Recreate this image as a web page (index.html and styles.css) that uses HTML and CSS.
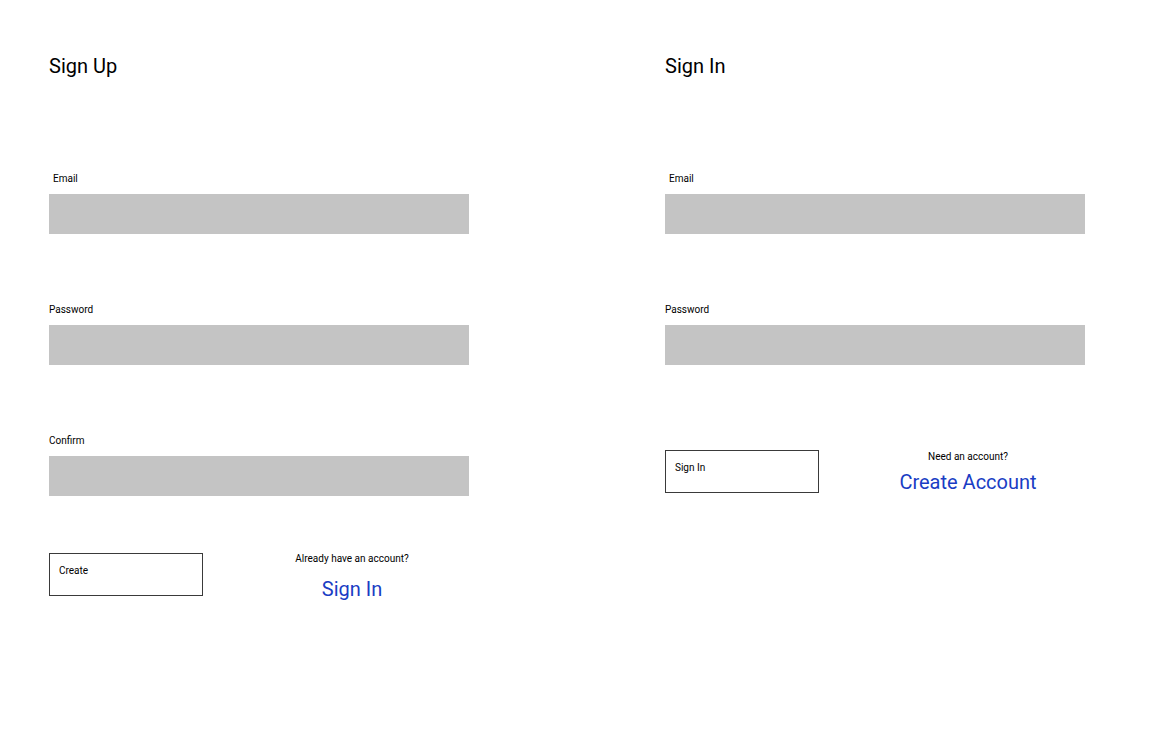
FILE: index.html
```html
<!DOCTYPE html>
<html lang="en">
<head>
<meta charset="utf-8">
<title>Sign Up / Sign In</title>
<link rel="stylesheet" href="styles.css">
</head>
<body>
<main class="page">
  <section class="panel">
    <h1 class="title">Sign Up</h1>
    <div class="fields">
      <div class="field">
        <label class="label label-indent">Email</label>
        <div class="input"></div>
      </div>
      <div class="field">
        <label class="label">Password</label>
        <div class="input"></div>
      </div>
      <div class="field">
        <label class="label">Confirm</label>
        <div class="input"></div>
      </div>
    </div>
    <div class="actions actions-signup">
      <button class="btn">Create</button>
      <div class="alt alt-signup">
        <p class="alt-text">Already have an account?</p>
        <a class="alt-link">Sign In</a>
      </div>
    </div>
  </section>
  <section class="panel">
    <h1 class="title">Sign In</h1>
    <div class="fields">
      <div class="field">
        <label class="label label-indent">Email</label>
        <div class="input"></div>
      </div>
      <div class="field">
        <label class="label">Password</label>
        <div class="input"></div>
      </div>
    </div>
    <div class="actions actions-signin">
      <button class="btn">Sign In</button>
      <div class="alt alt-signin">
        <p class="alt-text">Need an account?</p>
        <a class="alt-link">Create Account</a>
      </div>
    </div>
  </section>
</main>
</body>
</html>
```
FILE: styles.css
```css
* { box-sizing: border-box; }
html, body {
  margin: 0;
  padding: 0;
  background: #ffffff;
}
body {
  font-family: Roboto, "Liberation Sans", sans-serif;
  color: #000;
}
.page {
  display: flex;
  gap: 196px;
  padding: 54px 0 0 49px;
}
.panel {
  width: 420px;
  flex-shrink: 0;
  display: flex;
  flex-direction: column;
}
.title {
  margin: 0;
  font-size: 20px;
  line-height: 24px;
  font-weight: 400;
}
.fields {
  margin-top: 95px;
  display: flex;
  flex-direction: column;
  gap: 70px;
}
.field {
  display: flex;
  flex-direction: column;
  gap: 9px;
}
.label {
  font-size: 10px;
  line-height: 12px;
}
.label-indent { padding-left: 4px; }
.input {
  height: 40px;
  background: #c4c4c4;
}
.actions {
  display: flex;
  align-items: flex-start;
}
.actions-signup { margin-top: 57px; }
.actions-signin { margin-top: 85px; }
.btn {
  flex-shrink: 0;
  width: 154px;
  height: 43px;
  border: 1px solid #3a3a3a;
  background: #fff;
  font-family: Roboto, "Liberation Sans", sans-serif;
  font-size: 10px;
  line-height: 12px;
  padding: 11px 9px 10px;
  text-align: left;
  color: #000;
  display: flex;
  align-items: flex-start;
}
.alt {
  width: 298px;
  flex-shrink: 0;
  display: flex;
  flex-direction: column;
  align-items: center;
}
.alt-text {
  margin: 0;
  font-size: 10px;
  line-height: 12px;
}
.alt-signin .alt-text { margin-top: 1px; }
.alt-link {
  font-size: 20px;
  line-height: 24px;
  color: #1a3dc4;
}
.alt-signup .alt-link { margin-top: 12px; }
.alt-signin .alt-link { margin-top: 7px; }
```
